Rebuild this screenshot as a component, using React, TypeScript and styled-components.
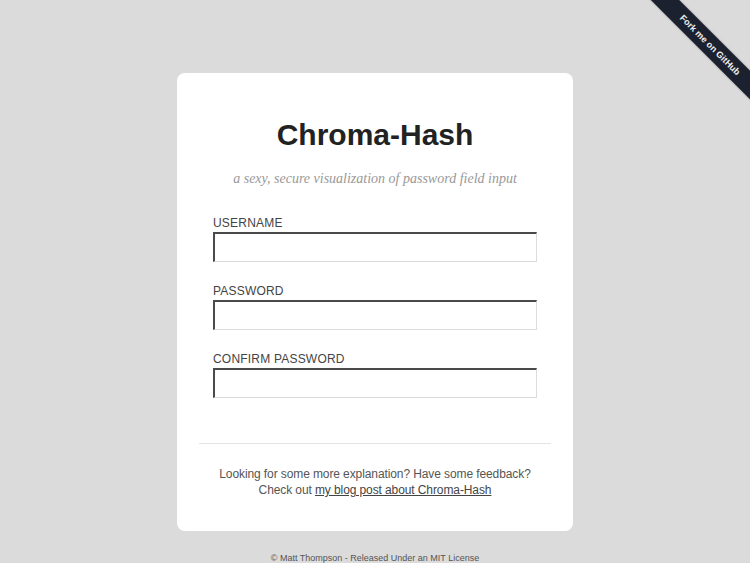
import styled, { createGlobalStyle } from "styled-components"

const GlobalStyle = createGlobalStyle`
  html, body {
    margin: 0;
    padding: 0;
    background: #dbdbdb;
    overflow: hidden;
  }
  body {
    font-family: "Liberation Sans", Arial, sans-serif;
    color: #444;
  }
`

const Page = styled.div`
  position: relative;
  min-height: 563px;
  padding-top: 73px;
  box-sizing: border-box;
`

const Card = styled.div`
  width: 396px;
  margin: 0 auto;
  background: #fff;
  border-radius: 8px;
  padding: 44px 0 33px;
  box-sizing: border-box;
`

const Title = styled.h1`
  margin: 0;
  font-size: 30px;
  line-height: 36px;
  font-weight: bold;
  text-align: center;
  color: #222;
`

const Tagline = styled.p`
  margin: 16px 0 0;
  font-family: "Liberation Serif", Georgia, serif;
  font-style: italic;
  font-size: 14px;
  line-height: 20px;
  text-align: center;
  color: #999;
`

const Form = styled.form`
  display: flex;
  flex-direction: column;
  gap: 21px;
  padding: 26px 36px 0;
`

const Field = styled.div`
  display: flex;
  flex-direction: column;
`

const Label = styled.label`
  font-size: 12px;
  line-height: 17px;
  letter-spacing: 0.2px;
  text-transform: uppercase;
  color: #444;
`

const Input = styled.input`
  box-sizing: border-box;
  width: 100%;
  height: 30px;
  margin: 0;
  padding: 4px 6px;
  background: #fff;
  border-style: solid;
  border-width: 2px 1px 1px 2px;
  border-color: #4a4a4a #dcdcdc #dcdcdc #4a4a4a;
  font: 14px "Liberation Sans", Arial, sans-serif;
  outline: none;
`

const Divider = styled.hr`
  margin: 45px 22px 0;
  border: 0;
  border-top: 1px solid #e4e4e4;
  height: 0;
`

const Note = styled.p`
  margin: 22px 0 0;
  font-size: 12px;
  line-height: 16px;
  letter-spacing: -0.1px;
  text-align: center;
  color: #555;

  a {
    color: #444;
    text-decoration: underline;
  }
`

const Credit = styled.footer`
  margin-top: 22px;
  font-size: 9px;
  line-height: 11px;
  text-align: center;
  color: #555;
`

const RibbonCorner = styled.div`
  position: absolute;
  top: 0;
  right: 0;
  width: 150px;
  height: 150px;
  overflow: hidden;
`

const Ribbon = styled.a`
  position: absolute;
  left: 30px;
  top: 35px;
  width: 160px;
  height: 20px;
  line-height: 20px;
  transform: rotate(45deg);
  background: #1c2130;
  color: #eee;
  font-size: 9px;
  font-weight: bold;
  text-align: center;
  text-decoration: none;
  box-shadow: 0 0 2px rgba(0, 0, 0, 0.4);
`

const fields = ["Username", "Password", "Confirm Password"]

const App = () => {
  return (
    <Page>
      <GlobalStyle />
      <Card>
        <Title>Chroma-Hash</Title>
        <Tagline>a sexy, secure visualization of password field input</Tagline>
        <Form>
          {fields.map((f) => (
            <Field key={f}>
              <Label>{f}</Label>
              <Input type={f === "Username" ? "text" : "password"} />
            </Field>
          ))}
        </Form>
        <Divider />
        <Note>
          Looking for some more explanation? Have some feedback?
          <br />
          Check out <a href="#">my blog post about Chroma-Hash</a>
        </Note>
      </Card>
      <Credit>© Matt Thompson - Released Under an MIT License</Credit>
      <RibbonCorner>
        <Ribbon href="#">Fork me on GitHub</Ribbon>
      </RibbonCorner>
    </Page>
  )
}

export default App
